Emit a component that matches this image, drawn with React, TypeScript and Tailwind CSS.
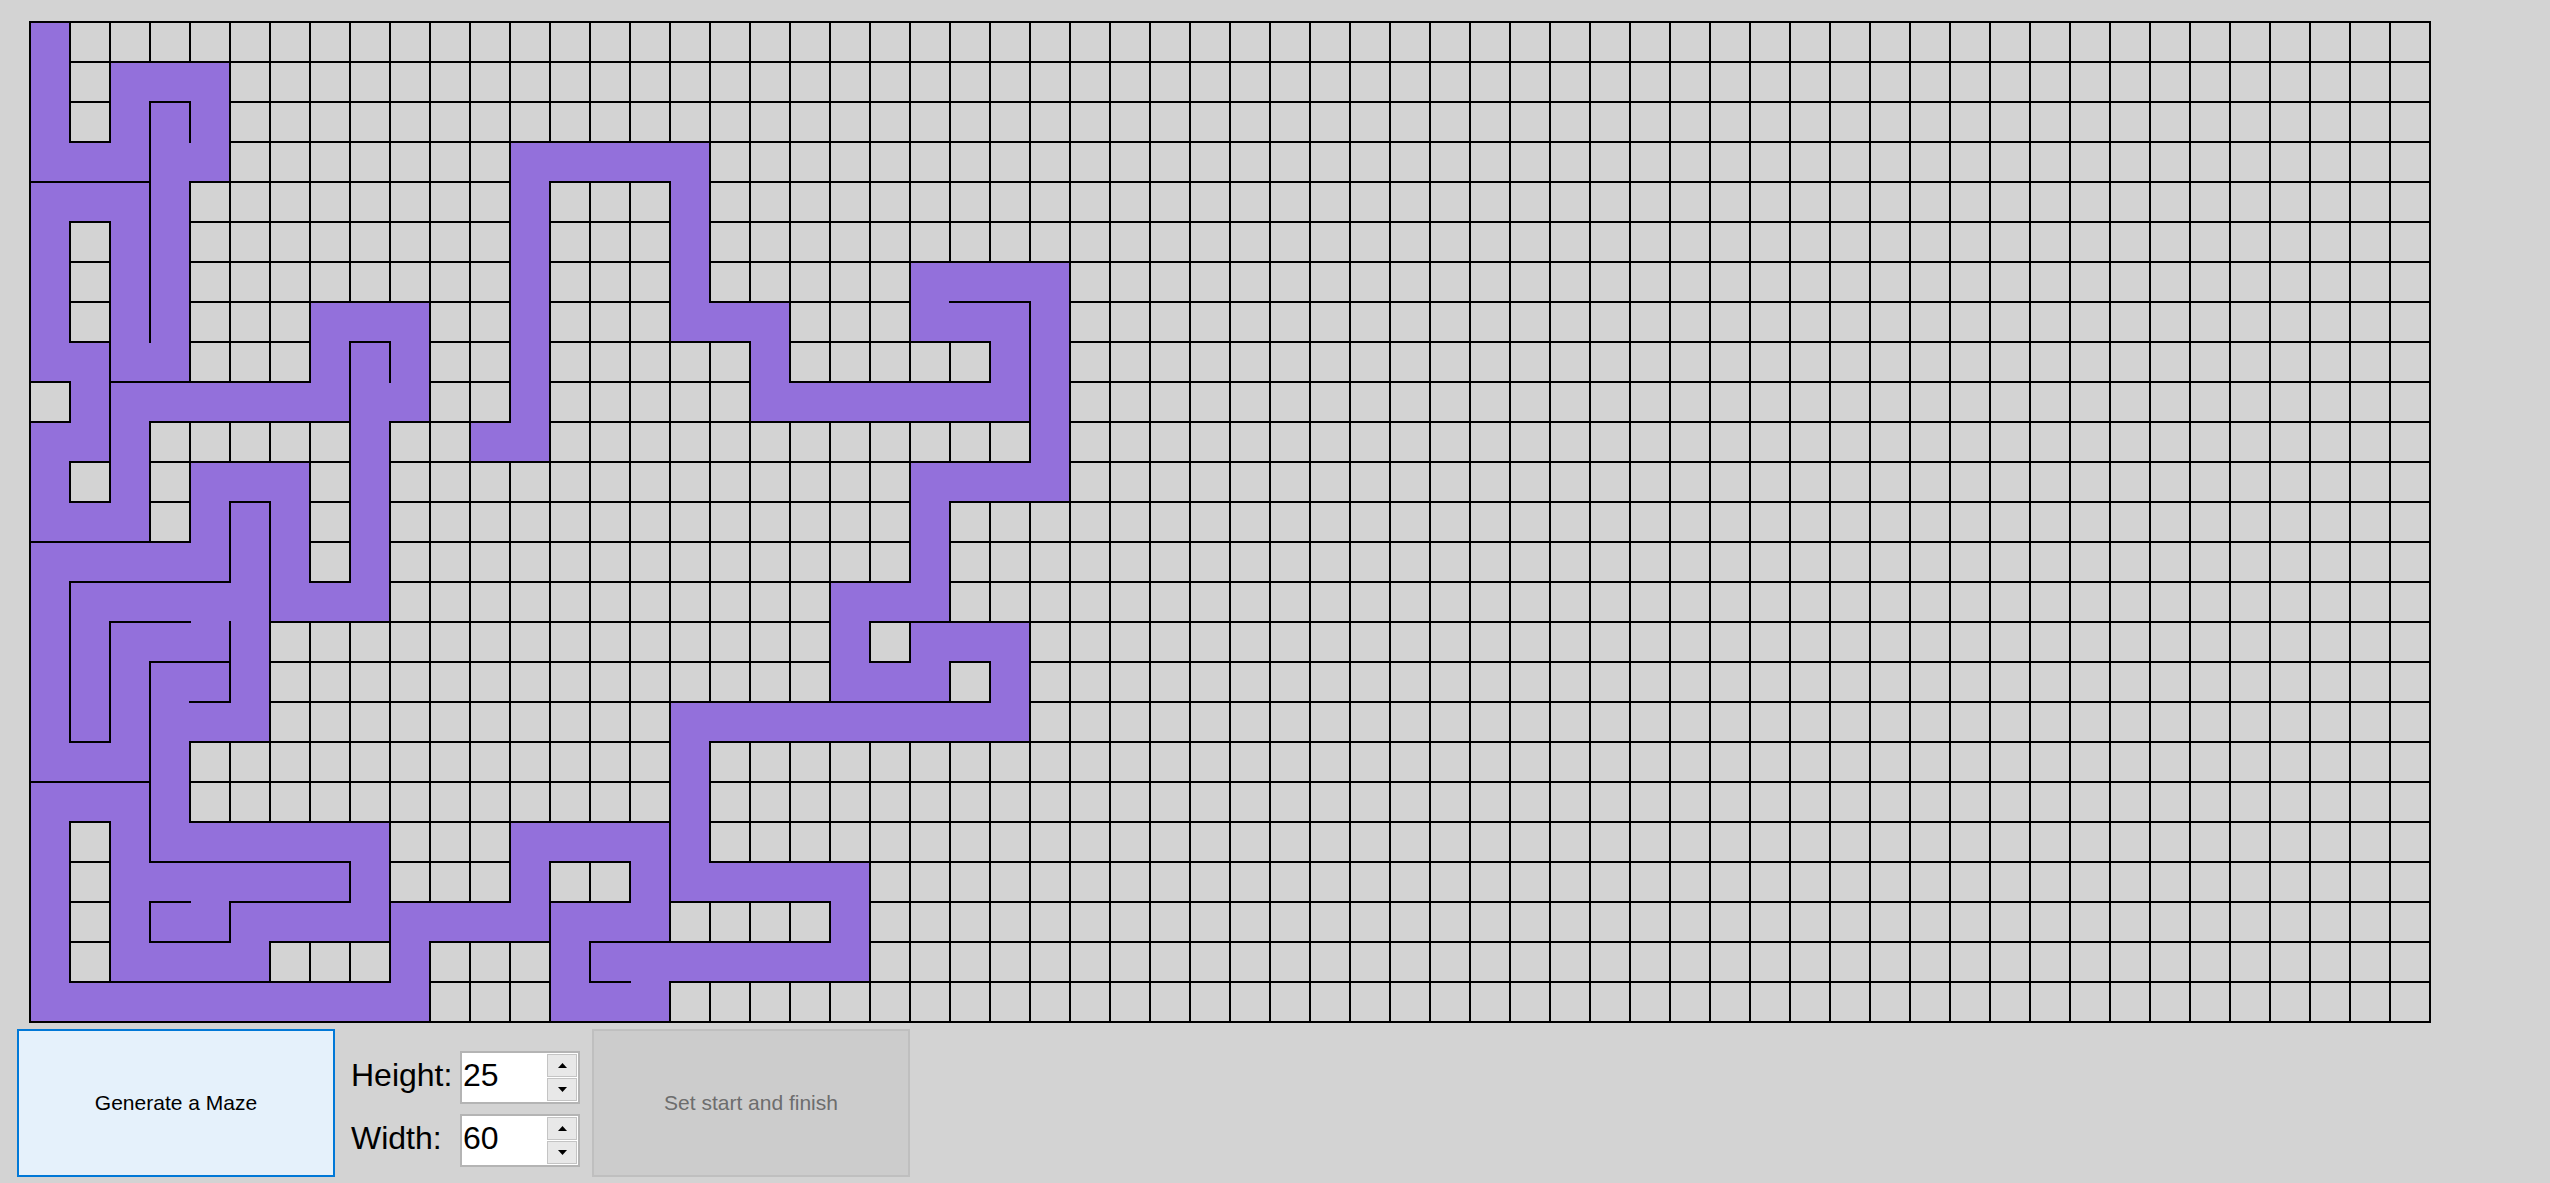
import React from "react";

const MAIN = `0,0 1,0 2,0 3,0 3,1 3,2 2,2 1,2 1,3 1,4 2,4 3,4 3,3 4,3 5,3 6,3 7,3 8,3 8,2 7,2 6,2 5,2 4,2 4,1 4,0 5,0 6,0 7,0 8,0 8,1 9,1 10,1 10,0 11,0 12,0 12,1 12,2 11,2 10,2 9,2 9,3 9,4 9,5 9,6 9,7 8,7 7,7 7,8 7,9 8,9 9,9 9,8 10,8 11,8 12,8 13,8 14,8 14,7 14,6 13,6 12,6 11,6 11,5 11,4 12,4 13,4 13,3 13,2 13,1 13,0 14,0 15,0 16,0 17,0 18,0 18,1 18,2 17,2 16,2 15,2 15,3 15,4 14,4 14,5 15,5 16,5 17,5 17,4 17,3 18,3 19,3 20,3 20,4 20,5 20,6 20,7 20,8 21,8 22,8 22,7 22,6 22,5 23,5 23,4 23,3 23,2 22,2 21,2 20,2 19,2 19,1 19,0 20,0 21,0 22,0 23,0 24,0 24,1 24,2 24,3 24,4 24,5 24,6 24,7 24,8 24,9 23,9 22,9 22,10 22,11 22,12 21,12 20,12 20,13 20,14 20,15 21,15 22,15 22,14 22,13 23,13 24,13 24,14 24,15 23,15 23,16 23,17 23,18 23,19 23,20 22,20 21,20 21,19 21,18 21,17 21,16 20,16 19,16 18,16 17,16 17,17 17,18 17,19 17,20 17,21 17,22 17,23 17,24 16,24 15,24 15,23 15,22 16,22 16,21 16,20 15,20 14,20 14,21 14,22 13,22 12,22 11,22 11,23 11,24 11,25 10,25 9,25 8,25 7,25 6,25 6,24 6,23 6,22 7,22 7,23 7,24 8,24 9,24 9,23 9,22 9,21 9,20 9,19 9,18 8,18 7,18 7,17 7,16 6,16 5,16 4,16 3,16 3,15 3,14 3,13 3,12 4,12 5,12 6,12 7,12 8,12 9,12 10,12 10,11`;

const BRANCHES = [
  "3,3 2,3",
  "9,8 8,8",
  "14,5 13,5 12,5",
  "14,4 14,3 14,2 14,1 15,1 16,1 17,1",
  "17,3 16,3 16,4",
  "21,2 21,3 21,4 21,5 21,6 21,7",
  "21,4 22,4 22,3",
  "23,15 23,14",
];

const ROWS = 25;
const COLS = 60;
const CELL = 40;

function buildMaze() {
  const purple: [number, number][] = [];
  const seen = new Set<string>();
  const open = new Set<string>();
  const paths = [MAIN, ...BRANCHES].map((s) =>
    s
      .trim()
      .split(/\s+/)
      .map((p) => p.split(",").map(Number) as [number, number])
  );
  for (const path of paths) {
    for (let i = 0; i < path.length; i++) {
      const [r, c] = path[i];
      const key = `${r},${c}`;
      if (!seen.has(key)) {
        seen.add(key);
        purple.push([r, c]);
      }
      if (i > 0) {
        const [pr, pc] = path[i - 1];
        if (pr === r) open.add(`x${r},${Math.max(pc, c)}`);
        else open.add(`y${Math.max(pr, r)},${c}`);
      }
    }
  }
  let d = "";
  for (let r = 0; r < ROWS; r++) {
    for (let k = 0; k <= COLS; k++) {
      if (!open.has(`x${r},${k}`)) d += `M${2 + CELL * k} ${2 + CELL * r}v${CELL}`;
    }
  }
  for (let k = 0; k <= ROWS; k++) {
    for (let c = 0; c < COLS; c++) {
      if (!open.has(`y${k},${c}`)) d += `M${2 + CELL * c} ${2 + CELL * k}h${CELL}`;
    }
  }
  return { purple, d };
}

const maze = buildMaze();

function Maze() {
  return (
    <svg
      className="block ml-[28px] mt-[20px] shrink-0"
      width={2404}
      height={1004}
      viewBox="0 0 2404 1004"
      shapeRendering="crispEdges"
    >
      <rect x={2} y={2} width={COLS * CELL} height={ROWS * CELL} fill="#d3d3d3" />
      {maze.purple.map(([r, c]) => (
        <rect key={`${r}-${c}`} x={2 + c * CELL} y={2 + r * CELL} width={CELL} height={CELL} fill="#9370db" />
      ))}
      <path d={maze.d} stroke="#000" strokeWidth={2} strokeLinecap="square" fill="none" />
    </svg>
  );
}

function Arrow({ up }: { up: boolean }) {
  return (
    <svg width="9" height="5" viewBox="0 0 9 5" className="block">
      {up ? <path d="M4.5 0L9 5H0Z" fill="#000" /> : <path d="M0 0H9L4.5 5Z" fill="#000" />}
    </svg>
  );
}

function Spinner({ value }: { value: string }) {
  return (
    <div className="w-[120px] h-[53px] border-2 border-[#b4b4b4] bg-white flex">
      <div className="flex-1 flex items-center pl-[1px] pb-[5px] text-[32px] leading-none text-black">{value}</div>
      <div className="w-[32px] flex flex-col p-[1px] gap-[1px]">
        <div className="flex-1 bg-[#e8e8e8] border border-[#c4c4c4] flex items-center justify-center">
          <Arrow up />
        </div>
        <div className="flex-1 bg-[#e8e8e8] border border-[#c4c4c4] flex items-center justify-center">
          <Arrow up={false} />
        </div>
      </div>
    </div>
  );
}

export default function App() {
  return (
    <div className="w-[2550px] h-[1183px] bg-[#d3d3d3] overflow-hidden flex flex-col font-['Liberation_Sans',Arial,sans-serif]">
      <Maze />
      <div className="flex items-start ml-[17px] mt-[5px]">
        <div className="w-[318px] h-[148px] border-2 border-[#0078d7] bg-[#e5f1fb] flex items-center justify-center text-[21px] text-black">
          Generate a Maze
        </div>
        <div className="ml-[16px] mt-[22px] grid grid-cols-[109px_120px] gap-y-[10px] items-center">
          <div className="text-[32px] leading-none text-black pb-[6px]">Height:</div>
          <Spinner value="25" />
          <div className="text-[32px] leading-none text-black pb-[6px]">Width:</div>
          <Spinner value="60" />
        </div>
        <div className="ml-[12px] w-[318px] h-[148px] border-2 border-[#bfbfbf] bg-[#cccccc] flex items-center justify-center text-[21px] text-[#6d6d6d]">
          Set start and finish
        </div>
      </div>
    </div>
  );
}
